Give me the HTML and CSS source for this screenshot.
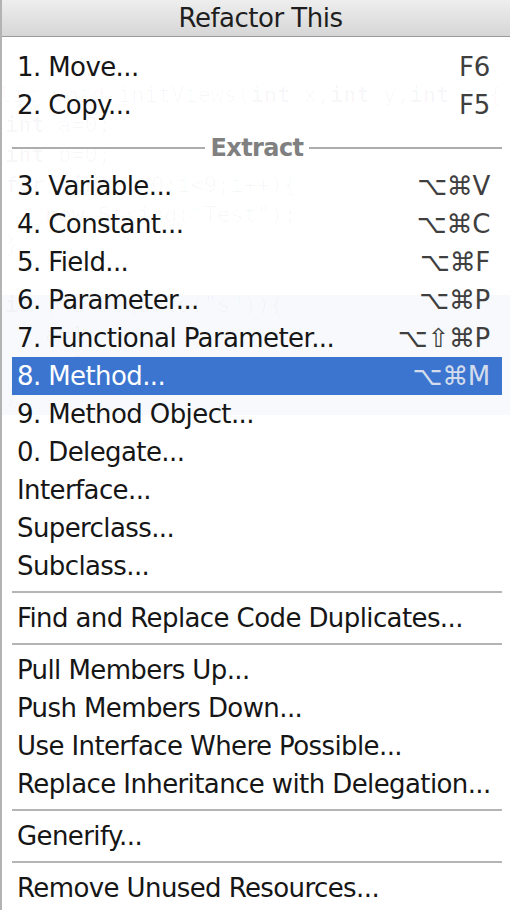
FILE: index.html
```html
<!DOCTYPE html>
<html lang="en">
<head>
<meta charset="utf-8">
<title>Refactor This</title>
<link rel="stylesheet" href="styles.css">
</head>
<body>
<div class="menu">
  <div class="backdrop" aria-hidden="true">
    <div class="band"></div>
    <pre class="code"><span class="l1">public void initViews(<b>int</b> x,<b>int</b> y,<b>int</b> z){</span>
<b>int</b> a=0;
<b>int</b> b=0;
<b>for</b> (<b>int</b> i=0;i&lt;9;i++){
   <b>new</b> String("Test");
}

<b>if</b> ("s".equals("s")){
   a=1;
   b=5;
}</pre>
  </div>
  <div class="title">Refactor This</div>
  <ul class="items">
    <li class="item"><span class="label">1. Move...</span><span class="key">F6</span></li>
    <li class="item"><span class="label">2. Copy...</span><span class="key">F5</span></li>
    <li class="group"><span class="group-name">Extract</span></li>
    <li class="item"><span class="label">3. Variable...</span><span class="key">⌥⌘V</span></li>
    <li class="item"><span class="label">4. Constant...</span><span class="key">⌥⌘C</span></li>
    <li class="item"><span class="label">5. Field...</span><span class="key">⌥⌘F</span></li>
    <li class="item"><span class="label">6. Parameter...</span><span class="key">⌥⌘P</span></li>
    <li class="item"><span class="label">7. Functional Parameter...</span><span class="key">⌥⇧⌘P</span></li>
    <li class="item selected"><span class="label">8. Method...</span><span class="key">⌥⌘M</span></li>
    <li class="item"><span class="label">9. Method Object...</span></li>
    <li class="item"><span class="label">0. Delegate...</span></li>
    <li class="item"><span class="label">Interface...</span></li>
    <li class="item"><span class="label">Superclass...</span></li>
    <li class="item"><span class="label">Subclass...</span></li>
    <li class="sep"></li>
    <li class="item"><span class="label">Find and Replace Code Duplicates...</span></li>
    <li class="sep"></li>
    <li class="item"><span class="label">Pull Members Up...</span></li>
    <li class="item"><span class="label">Push Members Down...</span></li>
    <li class="item"><span class="label">Use Interface Where Possible...</span></li>
    <li class="item"><span class="label">Replace Inheritance with Delegation...</span></li>
    <li class="sep"></li>
    <li class="item"><span class="label">Generify...</span></li>
    <li class="sep"></li>
    <li class="item"><span class="label">Remove Unused Resources...</span></li>
  </ul>
</div>
</body>
</html>
```
FILE: styles.css
```css
html, body {
  margin: 0;
  padding: 0;
  background: #ffffff;
}

body {
  font-family: "DejaVu Sans", "Liberation Sans", sans-serif;
  font-size: 26px;
  color: #161616;
  overflow: hidden;
}

.menu {
  position: relative;
  width: 510px;
  height: 910px;
  border-left: 2px solid #b3b3b3;
  box-sizing: border-box;
  background: #ffffff;
}

.backdrop {
  position: absolute;
  top: 0;
  left: 0;
  right: 0;
  bottom: 0;
  overflow: hidden;
  z-index: 0;
}

.band {
  position: absolute;
  top: 295px;
  left: 0;
  right: 0;
  height: 120px;
  background: #f7f9fc;
}

.code {
  position: absolute;
  top: 80px;
  left: 3px;
  margin: 0;
  font-family: "DejaVu Sans Mono", "Liberation Mono", monospace;
  font-size: 22px;
  line-height: 30px;
  color: rgba(20, 30, 80, 0.028);
}

.code b {
  font-weight: bold;
}

.code .l1 {
  margin-left: -46px;
}

.title {
  position: relative;
  z-index: 1;
  height: 35px;
  padding: 1px 0 0 9px;
  line-height: 35px;
  text-align: center;
  letter-spacing: -0.5px;
  color: #1e1e1e;
  background: linear-gradient(#eeeeee, #d6d6d6);
  border-bottom: 1px solid #9a9a9a;
}

.items {
  position: relative;
  z-index: 1;
  list-style: none;
  margin: 0;
  padding: 11px 0 0 0;
}

.item {
  display: flex;
  justify-content: space-between;
  align-items: center;
  height: 38px;
  line-height: 38px;
  margin: 0 8px 0 10px;
  padding: 0 12px 0 5px;
  letter-spacing: -0.6px;
  white-space: nowrap;
}

.key {
  color: #3f3f3f;
  letter-spacing: -0.3px;
}

.selected {
  background: #3b75d0;
  color: #ffffff;
}

.selected .key {
  color: #d3dcec;
}

.group {
  display: flex;
  align-items: center;
  gap: 6px;
  height: 43px;
  margin: 0 8px 0 10px;
  padding-top: 4px;
  box-sizing: border-box;
}

.group::before,
.group::after {
  content: "";
  flex: 1;
  height: 2px;
  background: #adadad;
}

.group-name {
  font-size: 24px;
  font-weight: bold;
  color: #808080;
  letter-spacing: -0.6px;
  line-height: 30px;
}

.sep {
  height: 14px;
  margin: 0 8px 0 10px;
  display: flex;
  align-items: center;
}

.sep::before {
  content: "";
  flex: 1;
  height: 2px;
  background: #b5b5b5;
}
```
